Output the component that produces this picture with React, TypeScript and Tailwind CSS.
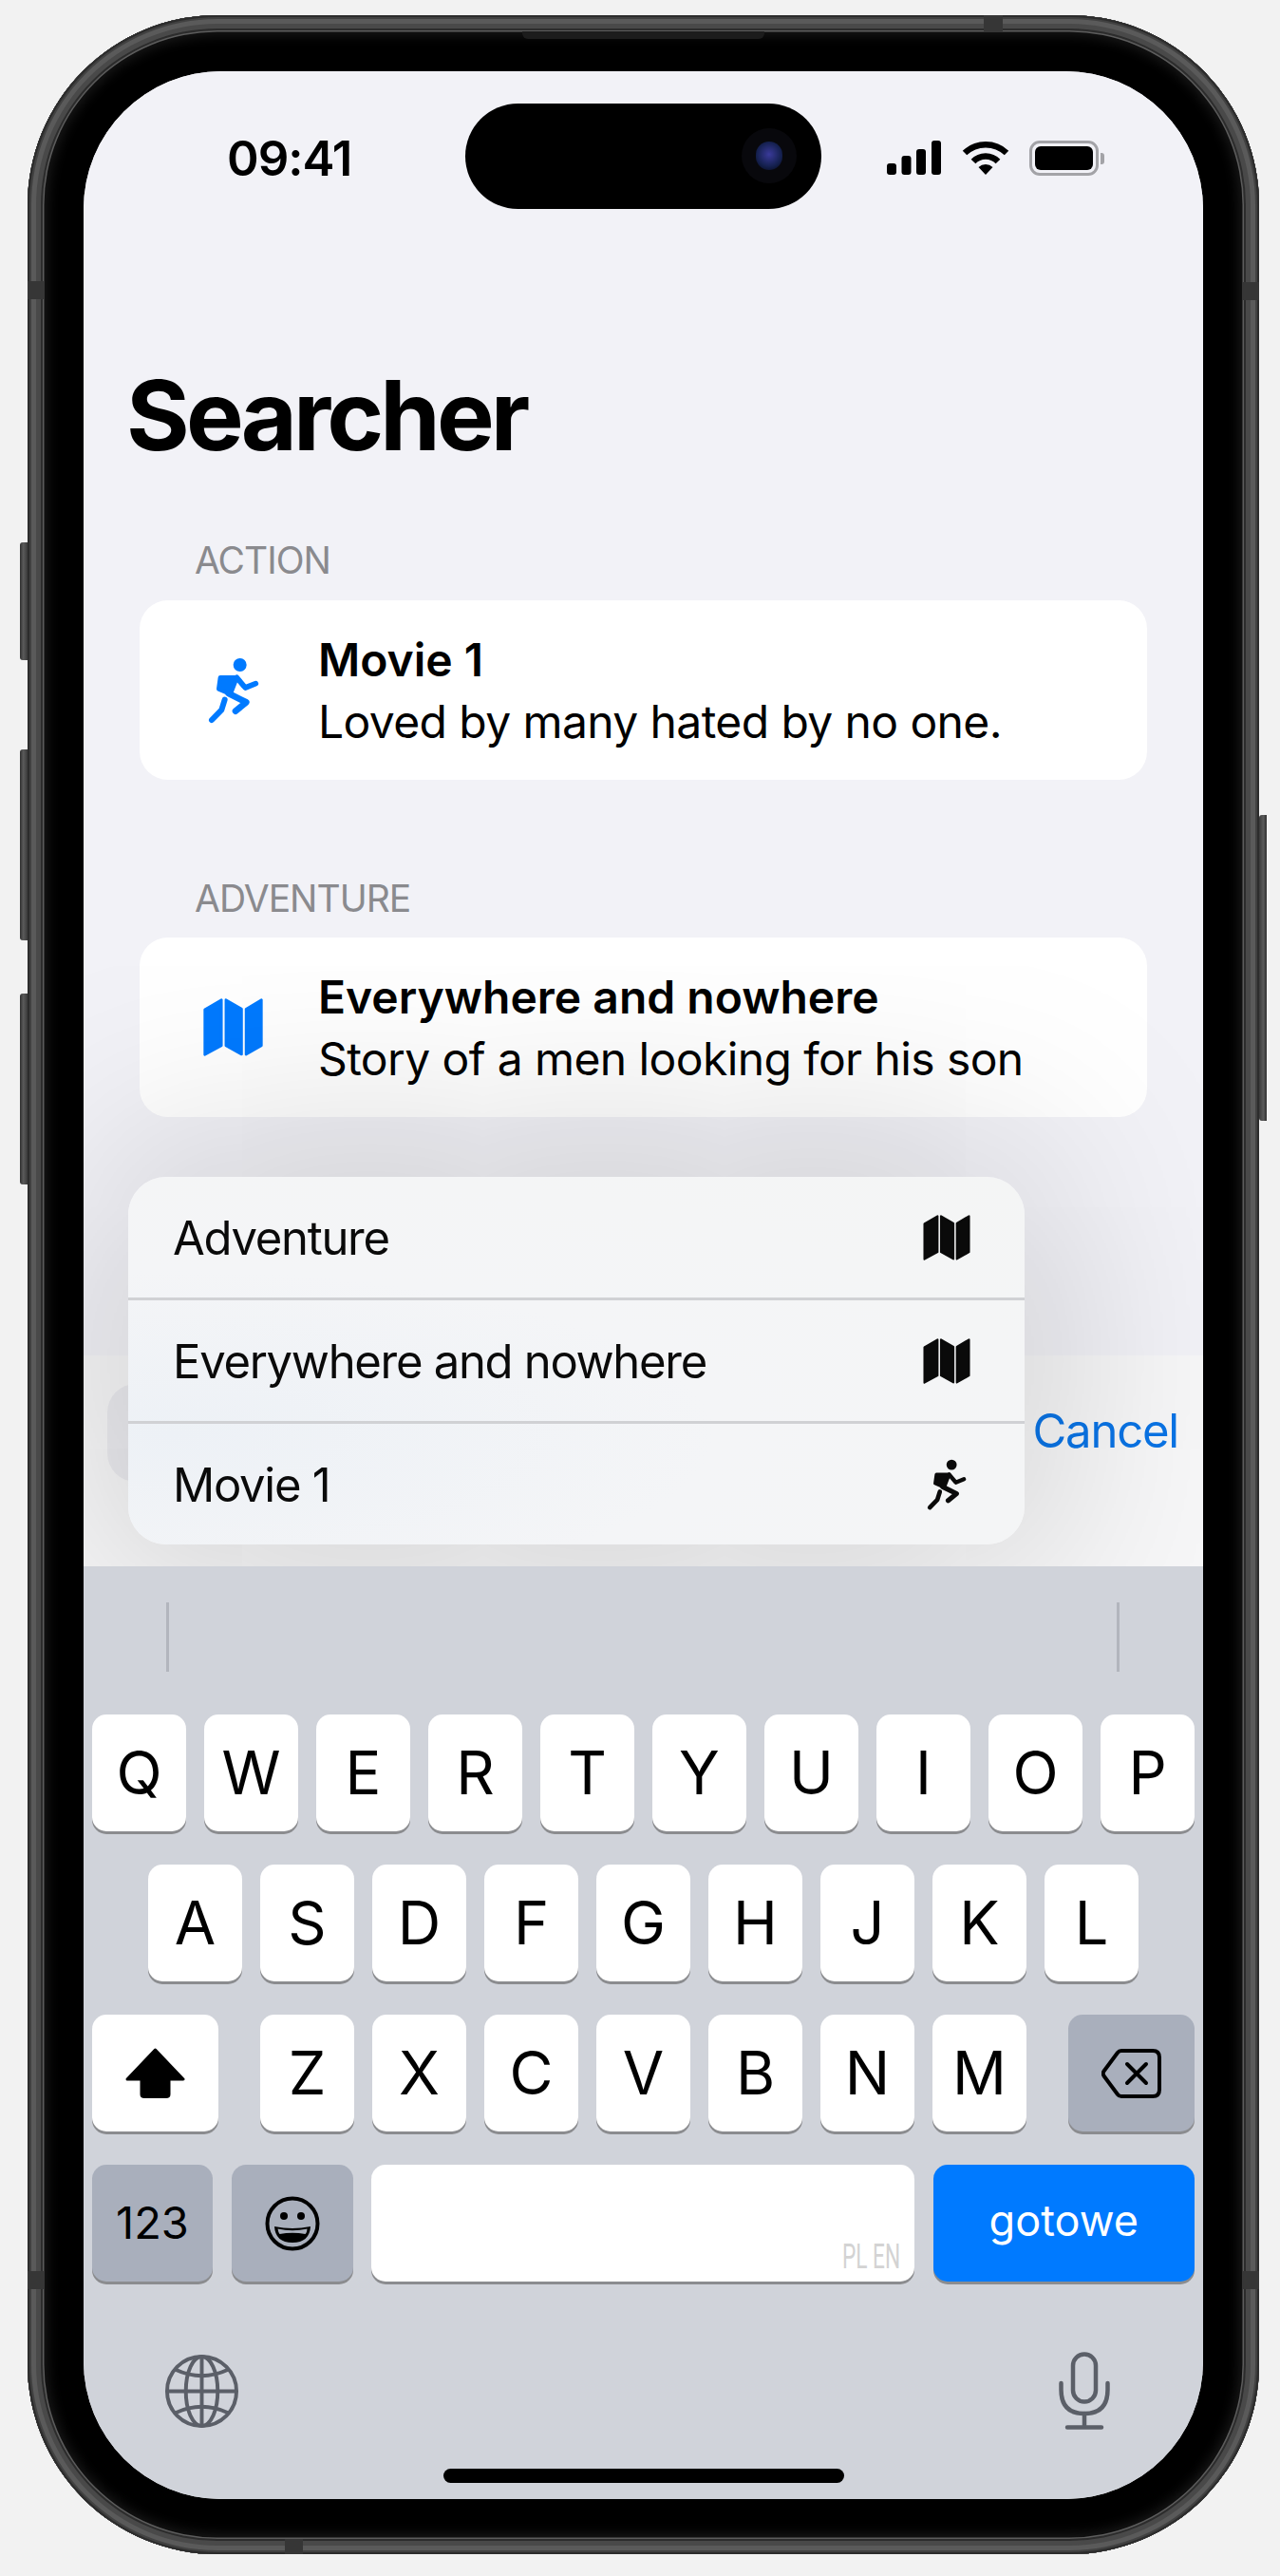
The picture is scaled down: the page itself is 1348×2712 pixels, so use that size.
import React from "react";

const RunnerIcon = ({ className }: { className: string }) => (
  <svg viewBox="-12 3 240 240" className={className} fill="none" stroke="currentColor" strokeLinecap="round" strokeLinejoin="round">
    <circle cx="128" cy="42" r="21" fill="currentColor" stroke="none" />
    <path d="M61 118 L66 82 H118 L98 134 Z" fill="currentColor" strokeWidth="14" />
    <path d="M118 82 L145 114 L178 101" strokeWidth="17" />
    <path d="M92 132 L148 160 L114 188" strokeWidth="20" />
    <path d="M80 152 L70 184 L39 216" strokeWidth="18" />
  </svg>
);

const MapIcon = ({ className }: { className: string }) => (
  <svg viewBox="0 0 190 184" className={className} fill="currentColor" stroke="currentColor" strokeWidth="8" strokeLinejoin="round">
    <path d="M5 36 L58 5 V150 L5 179 Z" />
    <path d="M72 5 L122 34 V178 L72 150 Z" />
    <path d="M136 34 L185 5 V150 L136 178 Z" />
  </svg>
);

const SignalIcon = () => (
  <svg viewBox="0 0 57 36" className="w-[57px] h-[36px]" fill="#000">
    <rect x="0" y="24" width="10" height="12" rx="3" />
    <rect x="15.5" y="16" width="10" height="20" rx="3" />
    <rect x="31" y="9" width="10" height="27" rx="3" />
    <rect x="47" y="0" width="10" height="36" rx="3" />
  </svg>
);

const WifiIcon = () => (
  <svg viewBox="0 0 50 36" className="w-[50px] h-[36px]" fill="none" stroke="#000">
    <path d="M3 13 A32 32 0 0 1 47 13" strokeWidth="6.5" />
    <path d="M12 22 A18 18 0 0 1 38 22" strokeWidth="6.5" />
    <path d="M25 36 L17.5 28 A11 11 0 0 1 32.5 28 Z" fill="#000" stroke="none" />
  </svg>
);

const BatteryIcon = () => (
  <div className="flex items-center">
    <div className="w-[73px] h-[37px] rounded-[11px] border-[3px] border-[#a3a3a7] p-[3px]">
      <div className="w-full h-full rounded-[6px] bg-black" />
    </div>
    <div className="w-[4px] h-[12px] ml-[2px] rounded-r-[3px] bg-[#a3a3a7]" />
  </div>
);

const ShiftIcon = () => (
  <svg viewBox="0 0 63 53" className="w-[63px] h-[53px]" fill="#000" stroke="#000" strokeWidth="3" strokeLinejoin="round">
    <path d="M31.5 2 L61 33 H46 V49 Q46 51.5 43 51.5 H20 Q17 51.5 17 49 V33 H2 Z" />
  </svg>
);

const BackspaceIcon = () => (
  <svg viewBox="0 0 63 52" className="w-[63px] h-[52px]" fill="none" stroke="#000" strokeLinecap="round" strokeLinejoin="round">
    <path d="M21 2 H54 Q61 2 61 9 V43 Q61 50 54 50 H21 Q18.5 50 17 48 L2.5 28.5 Q1 26 2.5 23.5 L17 4 Q18.5 2 21 2 Z" strokeWidth="4" />
    <path d="M27 16 L47 36 M47 16 L27 36" strokeWidth="4" />
  </svg>
);

const EmojiIcon = () => (
  <svg viewBox="0 0 58 58" className="w-[58px] h-[58px]">
    <circle cx="29" cy="29" r="26.5" fill="none" stroke="#000" strokeWidth="4" />
    <circle cx="20" cy="21" r="4" fill="#000" />
    <circle cx="38" cy="21" r="4" fill="#000" />
    <path d="M10 32 Q29 36 48 32 Q47 49 29 49 Q11 49 10 32 Z" fill="#000" />
    <path d="M13.5 34.5 Q29 38 44.5 34.5 Q44 39 42.5 40 Q29 37.5 15.5 40 Q14 38 13.5 34.5 Z" fill="#a9afbc" />
  </svg>
);

const GlobeIcon = () => (
  <svg viewBox="0 0 80 80" className="w-[79px] h-[79px]" fill="none" stroke="#5b5f68" strokeWidth="4">
    <circle cx="40" cy="40" r="37" />
    <ellipse cx="40" cy="40" rx="17" ry="37" />
    <path d="M40 3 V77 M3 40 H77" />
    <path d="M12 17 Q40 30 68 17 M12 63 Q40 50 68 63" />
  </svg>
);

const MicIcon = () => (
  <svg viewBox="0 0 54 82" className="w-[54px] h-[82px]" fill="none" stroke="#5b5f68" strokeWidth="4.5" strokeLinecap="round">
    <rect x="15" y="2.5" width="24" height="50" rx="12" />
    <path d="M2.5 33 V40 Q2.5 65 27 65 Q51.5 65 51.5 40 V33" />
    <path d="M27 65 V79 M9 79.5 H45" />
  </svg>
);

const LetterKey = ({ label }: { label: string }) => (
  <div className="w-[99px] h-[123px] shrink-0 flex items-center justify-center rounded-[15px] bg-white shadow-[0_3px_0_#8b8c8f] text-[63px] leading-none text-black">
    {label}
  </div>
);

const rowOne = ["Q", "W", "E", "R", "T", "Y", "U", "I", "O", "P"];
const rowTwo = ["A", "S", "D", "F", "G", "H", "J", "K", "L"];
const rowThree = ["Z", "X", "C", "V", "B", "N", "M"];

const Keyboard = () => (
  <div className="relative z-20 h-[982px] bg-[#d0d3da] flex flex-col">
    <div className="flex justify-between mt-[38px] h-[73px] pl-[87px] pr-[88px]">
      <div className="w-[3px] h-full bg-[#b2b5bd]" />
      <div className="w-[3px] h-full bg-[#b2b5bd]" />
    </div>
    <div className="mt-[45px] flex flex-col gap-y-[35px] px-[9px]">
      <div className="flex gap-x-[19px]">
        {rowOne.map((k) => (
          <LetterKey key={k} label={k} />
        ))}
      </div>
      <div className="flex justify-center gap-x-[19px]">
        {rowTwo.map((k) => (
          <LetterKey key={k} label={k} />
        ))}
      </div>
      <div className="flex justify-between">
        <div className="w-[133px] h-[123px] flex items-center justify-center rounded-[15px] bg-white shadow-[0_3px_0_#8b8c8f]">
          <ShiftIcon />
        </div>
        <div className="flex gap-x-[19px]">
          {rowThree.map((k) => (
            <LetterKey key={k} label={k} />
          ))}
        </div>
        <div className="w-[133px] h-[123px] flex items-center justify-center rounded-[15px] bg-[#a9afbc] shadow-[0_3px_0_#8b8c8f]">
          <BackspaceIcon />
        </div>
      </div>
      <div className="flex gap-x-[19.5px]">
        <div className="w-[127px] h-[123px] flex items-center justify-center rounded-[15px] bg-[#a9afbc] shadow-[0_3px_0_#8b8c8f] text-[47px] text-black">
          123
        </div>
        <div className="w-[128px] h-[123px] flex items-center justify-center rounded-[15px] bg-[#a9afbc] shadow-[0_3px_0_#8b8c8f]">
          <EmojiIcon />
        </div>
        <div className="w-[572px] h-[123px] flex items-end justify-end pr-[15px] pb-[4px] rounded-[15px] bg-white shadow-[0_3px_0_#8b8c8f]">
          <span className="text-[36px] leading-[44px] text-[#d3d3d3] scale-x-[0.63] origin-right whitespace-nowrap font-[family-name:Roboto,sans-serif]">PL EN</span>
        </div>
        <div className="flex-1 h-[123px] flex items-center justify-center pb-[6px] rounded-[15px] bg-[#007aff] shadow-[0_3px_0_#8b8c8f] text-[45px] text-white">
          gotowe
        </div>
      </div>
    </div>
    <div className="mt-[74px] flex items-center justify-between pl-[85px] pr-[98px]">
      <GlobeIcon />
      <MicIcon />
    </div>
    <div className="mt-[41px] flex justify-center">
      <div className="w-[422px] h-[15px] rounded-full bg-black" />
    </div>
  </div>
);

const ResultCard = ({ icon, title, text }: { icon: React.ReactNode; title: string; text: string }) => (
  <div className="h-[189px] rounded-[30px] bg-white flex items-center pl-[66px]">
    <div className="w-[65px] flex justify-center shrink-0 text-[#007aff]">{icon}</div>
    <div className="ml-[57px] pt-[1px] text-[48px] leading-[65px] text-black">
      <div className="font-semibold">{title}</div>
      <div className="tracking-[-0.6px]">{text}</div>
    </div>
  </div>
);

const menuRows = [
  { label: "Adventure", kind: "map" },
  { label: "Everywhere and nowhere", kind: "map" },
  { label: "Movie 1", kind: "run" },
];

const SuggestionMenu = () => (
  <div className="absolute z-10 left-[47px] top-[1164px] w-[944px] h-[387px] rounded-[40px] bg-[radial-gradient(ellipse_at_5%_70%,#edf1f6,#f4f5f7_45%,#f4f5f5)] shadow-[0_0_240px_rgba(0,0,0,0.26)] flex flex-col divide-y-[3px] divide-[#d0d1d4]">
    {menuRows.map((row) => (
      <div key={row.label} className="flex-1 flex items-center justify-between pl-[47px] pr-[56px] text-[49px] tracking-[-1.3px] text-[#0a0a0a]">
        <span className="pt-[3px]">{row.label}</span>
        <div className="w-[52px] flex justify-center">
          {row.kind === "map" ? <MapIcon className="w-[52px] h-[48px]" /> : <RunnerIcon className="w-[62px] h-[62px] shrink-0" />}
        </div>
      </div>
    ))}
  </div>
);

const Screen = () => (
  <div className="relative w-[1179px] h-[2556px] rounded-[145px] overflow-hidden bg-[#f2f2f7] flex flex-col">
    <div className="h-[1352px] bg-[#f2f2f7]">
      <div className="mt-[62px] h-[60px] flex justify-between pl-[151px] pr-[104px]">
        <span className="text-[51px] leading-[60px] font-semibold text-black tracking-[-1px]">09:41</span>
        <div className="flex items-start gap-x-[21.5px] pt-[11px]">
          <SignalIcon />
          <WifiIcon />
          <BatteryIcon />
        </div>
      </div>
      <h1 className="mt-[180px] pl-[45px] text-[102px] leading-[120px] font-bold tracking-[-3.9px] text-black">Searcher</h1>
      <div className="px-[59px]">
        <div className="mt-[70px] pl-[58px] text-[39px] leading-[46px] tracking-[-1px] text-[#8a8a8e]">ACTION</div>
        <div className="mt-[19px]">
          <ResultCard icon={<RunnerIcon className="w-[80px] h-[80px] shrink-0" />} title="Movie 1" text="Loved by many hated by no one." />
        </div>
        <div className="mt-[102px] pl-[58px] text-[39px] leading-[46px] tracking-[-1px] text-[#8a8a8e]">ADVENTURE</div>
        <div className="mt-[18px]">
          <ResultCard icon={<MapIcon className="w-[65px] h-[61px]" />} title="Everywhere and nowhere" text="Story of a men looking for his son" />
        </div>
      </div>
    </div>
    <div className="h-[222px] bg-[#f7f7f8] flex items-start gap-x-[14px] pl-[25px] pr-[26px] pt-[30px]">
      <div className="flex-1 h-[103px] rounded-[30px] bg-[#ebebef]" />
      <span className="mt-[20px] text-[49px] leading-[60px] tracking-[-1.2px] text-[#0a74e6]">Cancel</span>
    </div>
    <SuggestionMenu />
    <Keyboard />
    <div className="absolute z-30 left-[402px] top-[34px] w-[375px] h-[111px] rounded-full bg-black">
      <div className="absolute left-[291px] top-[26px] w-[58px] h-[58px] rounded-full bg-[#08080c] flex items-center justify-center">
        <div className="w-[28px] h-[30px] rounded-full bg-[radial-gradient(circle_at_50%_45%,#3a3a9a,#14204e_60%,#050510)]" />
      </div>
    </div>
  </div>
);

const SideButton = ({ className }: { className: string }) => (
  <div className={`absolute w-[8px] bg-[linear-gradient(90deg,#2f2f2f,#5a5a5a_45%,#3a3a3a)] ${className}`} />
);

const App = () => {
  return (
    <div className="w-[1348px] h-[2712px] overflow-hidden bg-[#f2f2f2] pl-[29px] pt-[16px] font-[family-name:Inter,sans-serif]">
      <div className="relative w-[1297px] h-[2673px] rounded-[200px] bg-black p-[59px] shadow-[inset_0_0_0_2px_#2c2c2c,inset_0_0_0_4px_#414141,inset_0_0_0_9px_#5a5a5a,inset_0_0_0_14px_#494949,inset_0_0_0_16px_#2c2c2c,inset_0_0_0_17.5px_#5c5c5c,inset_0_0_0_18.5px_#101010,inset_0_0_14px_20px_#1c1c1c]">
        <SideButton className="-left-[8px] top-[555px] h-[124px] rounded-l-[3px]" />
        <SideButton className="-left-[8px] top-[773px] h-[201px] rounded-l-[3px]" />
        <SideButton className="-left-[8px] top-[1030px] h-[201px] rounded-l-[3px]" />
        <SideButton className="-right-[8px] top-[842px] h-[322px] rounded-r-[3px] rotate-180" />
        <div className="absolute left-[521px] top-[17px] w-[255px] h-[8px] rounded-b-[6px] bg-[#1c1c1c]" />
        <div className="absolute left-0 top-[280px] w-[17px] h-[19px] bg-[#363636]" />
        <div className="absolute right-0 top-[281px] w-[17px] h-[19px] bg-[#363636]" />
        <div className="absolute left-0 top-[2375px] w-[17px] h-[19px] bg-[#363636]" />
        <div className="absolute right-0 top-[2375px] w-[17px] h-[19px] bg-[#363636]" />
        <div className="absolute left-[1007px] top-0 w-[20px] h-[17px] bg-[#363636]" />
        <div className="absolute left-[271px] bottom-0 w-[19px] h-[16px] bg-[#363636]" />
        <Screen />
      </div>
    </div>
  );
};

export default App;
